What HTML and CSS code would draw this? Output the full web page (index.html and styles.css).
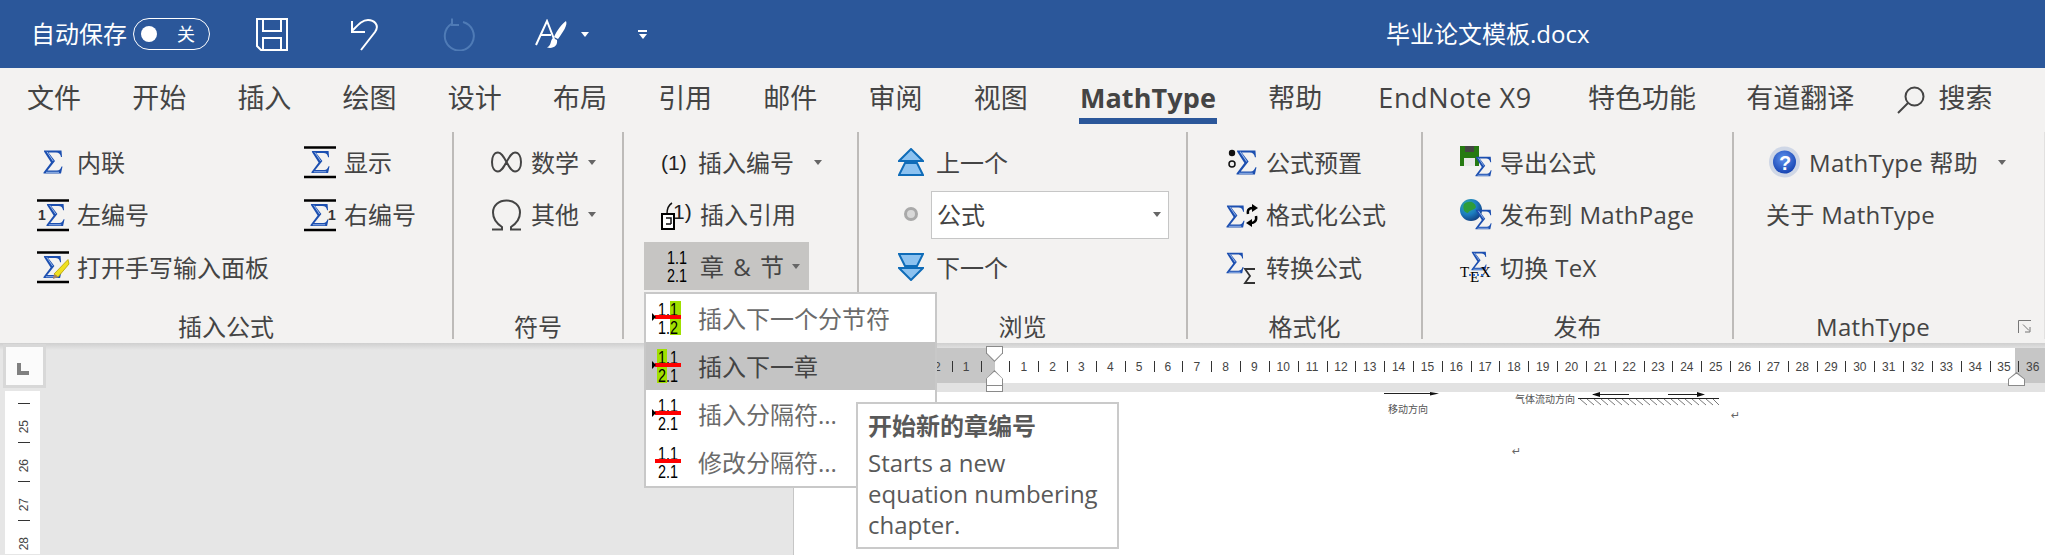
FILE: index.html
```html
<!DOCTYPE html>
<html lang="zh">
<head>
<meta charset="utf-8">
<title>毕业论文模板.docx</title>
<link rel="stylesheet" href="styles.css">
</head>
<body>
<svg class="defs" width="0" height="0">
  <defs>
    <symbol id="sigma" viewBox="0 0 20 24">
      <path fill="#1c4fb0" d="M1 0.5H18.5L19 7H18C17.5 4 16 2.5 13 2.5H5.5L12 11L4.5 20.5H14C16.5 20.5 17.5 19 18.5 16.5H19.5L18 23.5H0.5V22.5L8 12.5L1 1.5Z"/>
      <path fill="none" stroke="#9dbcec" stroke-width="1" d="M4 1.8L10.2 11M3 22.3H16"/>
    </symbol>
    <radialGradient id="globe" cx="35%" cy="30%" r="75%">
      <stop offset="0" stop-color="#35b0a0"/><stop offset=".55" stop-color="#1c7dc0"/><stop offset="1" stop-color="#123f80"/>
    </radialGradient>
    <radialGradient id="help" cx="45%" cy="35%" r="70%">
      <stop offset="0" stop-color="#5f92ee"/><stop offset="1" stop-color="#123fae"/>
    </radialGradient>
  </defs>
</svg>
<div class="app">
  <header class="titlebar">
    <span class="autosave">自动保存</span>
    <span class="toggle"><i class="knob"></i><span class="toggle-text">关</span></span>
    <svg class="qa qa-save" width="32" height="33" viewBox="0 0 32 33"><path d="M1 1H31V32H5L1 28ZM7 1V13H25V1M7 32V20H25V32"/></svg>
    <svg class="qa qa-undo" width="30" height="33" viewBox="0 0 30 33"><path d="M11 32L25 14C30 7 24 2 18 2C12 2 8 7 2 13M2 3V14H15"/></svg>
    <svg class="qa qa-redo" width="32" height="33" viewBox="0 0 32 33"><path d="M20 4A14.500 14.500 0 1 1 9 5.500M9 0.500V7H16"/></svg>
    <svg class="qa qa-paint" width="33" height="30" viewBox="0 0 33 30"><path d="M1 26L12 2L19 20M6 16H16"/><path class="solid" d="M31 2C33 6 28 13 23 20L19 18C22 11 27 5 31 2ZM18 19C15 21 17 26 12 28.500C18 30 23 27 22 21Z"/></svg>
    <i class="caret-w"></i>
    <span class="qat-more"><i class="qat-bar"></i><i class="caret-w small"></i></span>
    <span class="doc-title">毕业论文模板.docx</span>
  </header>

  <nav class="tabs">
    <span class="tab">文件</span>
    <span class="tab">开始</span>
    <span class="tab">插入</span>
    <span class="tab">绘图</span>
    <span class="tab">设计</span>
    <span class="tab">布局</span>
    <span class="tab">引用</span>
    <span class="tab">邮件</span>
    <span class="tab">审阅</span>
    <span class="tab">视图</span>
    <span class="tab active">MathType</span>
    <span class="tab">帮助</span>
    <span class="tab tab-en">EndNote X9</span>
    <span class="tab tab-sp">特色功能</span>
    <span class="tab tab-yd">有道翻译</span>
    <span class="search">
      <svg width="28" height="28" viewBox="0 0 28 28"><circle cx="17.500" cy="10.500" r="9"/><path d="M11 17L1 27"/></svg>
      <span class="tab">搜索</span>
    </span>
  </nav>

  <section class="ribbon">
    <div class="group g-insert">
      <div class="body two-col">
        <div class="item">
          <svg class="ic" width="32" height="32"><use href="#sigma" x="6" y="4" width="20" height="24"/></svg><span>内联</span>
        </div>
        <div class="item">
          <svg class="ic" width="32" height="32"><path class="rule" d="M0 1.500H32M0 31H32"/><use href="#sigma" x="7" y="4" width="19" height="24"/></svg><span>显示</span>
        </div>
        <div class="item">
          <svg class="ic" width="32" height="32"><path class="rule" d="M0 1.500H32M0 31H32"/><text class="digit" x="1" y="21">1</text><use href="#sigma" x="9" y="4" width="19" height="24"/></svg><span>左编号</span>
        </div>
        <div class="item">
          <svg class="ic" width="32" height="32"><path class="rule" d="M0 1.500H32M0 31H32"/><use href="#sigma" x="6" y="4" width="19" height="24"/><text class="digit" x="24" y="21">1</text></svg><span>右编号</span>
        </div>
        <div class="item span-2">
          <svg class="ic" width="32" height="32"><path class="rule" d="M0 1.500H32M0 31H32"/><use href="#sigma" x="6" y="4" width="19" height="24"/><path fill="#f0e020" stroke="#b5a000" stroke-width=".8" d="M31 8.500L32 13L21 26L17 23Z"/><path fill="#a98060" d="M17 23L21 26L16 28Z"/></svg><span>打开手写输入面板</span>
        </div>
      </div>
      <div class="label">插入公式</div>
    </div>

    <div class="group g-symbol">
      <div class="body">
        <div class="item">
          <svg class="ic-31" width="31" height="32" viewBox="0 0 31 32"><path class="line" d="M15.500 16C12 9.500 10 6.500 7 6.500C3 6.500 1 11 1 16C1 21 3 25.500 7 25.500C10 25.500 12 22.500 15.500 16C19 9.500 21 6.500 24 6.500C28 6.500 30 11 30 16C30 21 28 25.500 24 25.500C21 25.500 19 22.500 15.500 16Z"/></svg>
          <span>数学</span><i class="caret"></i>
        </div>
        <div class="item">
          <svg class="ic-31" width="31" height="32" viewBox="0 0 31 32"><path class="line" d="M1 30.500H11V28C5 24 2 19 2 13.500C2 6 8 1.500 15.500 1.500C23 1.500 29 6 29 13.500C29 19 26 24 20 28V30.500H30"/></svg>
          <span>其他</span><i class="caret"></i>
        </div>
      </div>
      <div class="label">符号</div>
    </div>

    <div class="group g-number">
      <div class="body">
        <div class="item tight">
          <svg class="ic" width="32" height="32"><text class="paren" x="1" y="24">(1)</text></svg>
          <span>插入编号</span><i class="caret caret-far"></i>
        </div>
        <div class="item">
          <svg class="ic" width="32" height="32" viewBox="0 0 32 32"><text class="paren" x="13" y="20">1)</text><path class="line thin" d="M12 4C7 7 7 12 7 15"/><rect x="2" y="15" width="12" height="15" fill="#fff" stroke="#000" stroke-width="2"/><path class="line thin" d="M6 19H11V25M11 25L6 25"/></svg>
          <span>插入引用</span>
        </div>
        <div class="item active">
          <svg class="ic" width="32" height="34" viewBox="0 0 32 34"><text class="num" x="7" y="15" textLength="20" lengthAdjust="spacingAndGlyphs">1.1</text><text class="num" x="7" y="33" textLength="20" lengthAdjust="spacingAndGlyphs">2.1</text></svg>
          <span class="spaced">章 &amp; 节</span><i class="caret"></i>
        </div>
      </div>
      <div class="label"></div>
    </div>

    <div class="group g-browse">
      <div class="body">
        <div class="item">
          <svg class="ic-nav" width="26" height="28" viewBox="0 0 26 28"><path class="tri" d="M13 1L25 13H1ZM7 15H19L25 27H1Z"/></svg><span>上一个</span>
        </div>
        <div class="item combo-row">
          <span class="radio-box"><i class="radio"></i></span>
          <div class="combo"><span>公式</span><i class="caret"></i></div>
        </div>
        <div class="item">
          <svg class="ic-nav" width="26" height="28" viewBox="0 0 26 28"><path class="tri" d="M13 27L25 15H1ZM7 13H19L25 1H1Z"/></svg><span>下一个</span>
        </div>
      </div>
      <div class="label">浏览</div>
    </div>

    <div class="group g-format">
      <div class="body">
        <div class="item">
          <svg class="ic" width="32" height="32"><circle cx="6" cy="7" r="3.200" fill="#111"/><circle cx="6" cy="18" r="3" fill="#eee" stroke="#111" stroke-width="1.500"/><use href="#sigma" x="10" y="3" width="21" height="27"/></svg><span>公式预置</span>
        </div>
        <div class="item">
          <svg class="ic" width="32" height="32"><use href="#sigma" x="0" y="5" width="19" height="25"/><path class="line black" d="M22 15C21 10 24 9 27 9M30 17C31 22 28 24 25 24"/><path class="blackfill" d="M26 5L32 9L26 13ZM26 20L20 24L26 28Z"/></svg><span>格式化公式</span>
        </div>
        <div class="item">
          <svg class="ic" width="32" height="34" viewBox="0 0 32 34"><use href="#sigma" x="0" y="1" width="18" height="24"/><path class="line dark" d="M29 19H19L24 26L19 33H29"/></svg><span>转换公式</span>
        </div>
      </div>
      <div class="label">格式化</div>
    </div>

    <div class="group g-publish">
      <div class="body">
        <div class="item">
          <svg class="ic" width="32" height="32"><rect x="0" y="0" width="19" height="20" fill="#267a12"/><rect x="5" y="0" width="9" height="6" fill="#444"/><rect x="4" y="12" width="11" height="8" fill="#e8e8e8"/><use href="#sigma" x="15" y="9" width="17" height="23"/></svg><span>导出公式</span>
        </div>
        <div class="item">
          <svg class="ic" width="32" height="32"><circle cx="11" cy="11" r="11" fill="url(#globe)"/><path fill="#2e9d3a" d="M4 5C9 1 15 3 16 8C14 12 10 10 8 14C5 14 2 10 4 5Z"/><use href="#sigma" x="15" y="9" width="17" height="23"/></svg><span class="latin">发布到 MathPage</span>
        </div>
        <div class="item">
          <svg class="ic" width="32" height="32"><use href="#sigma" x="11" y="0" width="16" height="20"/><text class="tex" x="0" y="26">T</text><text class="tex" x="10" y="31">E</text><text class="tex" x="20" y="26">X</text><path stroke="#3a78d8" stroke-width="2" stroke-dasharray="2 2" d="M9 24H24"/></svg><span class="latin">切换 TeX</span>
        </div>
      </div>
      <div class="label">发布</div>
    </div>

    <div class="group g-mathtype">
      <div class="body">
        <div class="item">
          <svg class="ic-help" width="33" height="32" viewBox="0 0 33 32"><circle cx="16.500" cy="16" r="15.500" fill="#cfd7e6"/><circle cx="16.500" cy="16" r="11.500" fill="url(#help)"/><text class="help-q" x="11" y="24">?</text></svg>
          <span class="latin">MathType 帮助</span><i class="caret caret-help"></i>
        </div>
        <div class="item about"><span class="latin">关于 MathType</span></div>
      </div>
      <div class="label label-mt">MathType</div>
      <svg class="launcher" width="14" height="14" viewBox="0 0 14 14"><path d="M13 .5H.5V13" /><path d="M5 4.500L11 10.500M12 7V12H7"/></svg>
    </div>
  </section>

  <main class="workspace">
    <aside class="side">
      <div class="corner"><i class="corner-mark"></i></div>
      <div class="vruler">
        <div class="vcell"><span>25</span></div>
        <div class="vcell"><span>26</span></div>
        <div class="vcell"><span>27</span></div>
        <div class="vcell"><span>28</span></div>
      </div>
    </aside>
    <div class="docarea">
      <div class="hruler-wrap">
        <div class="hruler">
          <span>6</span><span>5</span><span>4</span><span>3</span><span>2</span><span>1</span><span></span><span>1</span><span>2</span><span>3</span><span>4</span><span>5</span><span>6</span><span>7</span><span>8</span><span>9</span><span>10</span><span>11</span><span>12</span><span>13</span><span>14</span><span>15</span><span>16</span><span>17</span><span>18</span><span>19</span><span>20</span><span>21</span><span>22</span><span>23</span><span>24</span><span>25</span><span>26</span><span>27</span><span>28</span><span>29</span><span>30</span><span>31</span><span>32</span><span>33</span><span>34</span><span>35</span><span>36</span>
        </div>
      </div>
      <div class="page">
        <svg class="figure" width="370" height="70" viewBox="0 0 370 70">
          <path class="fig-line" d="M4 1.500H52M213 2.500H249M288 2.500H318M198 6.500H339"/>
          <path class="fig-solid" d="M50 0L59 1.500L50 3.500ZM220 0L212 2.500L220 5ZM317 0L325 2.500L317 5Z"/>
          <path class="fig-hatch" d="M200 7L207 13M207 7L214 13M214 7L221 13M221 7L228 13M228 7L235 13M235 7L242 13M242 7L249 13M249 7L256 13M256 7L263 13M263 7L270 13M270 7L277 13M277 7L284 13M284 7L291 13M291 7L298 13M298 7L305 13M305 7L312 13M312 7L319 13M319 7L326 13M326 7L333 13M333 7L339 13"/>
          <text class="fig-text" x="8" y="21">移动方向</text>
          <text class="fig-text" x="135" y="11">气体流动方向</text>
          <text class="fig-mark" x="351" y="27">↵</text>
          <text class="fig-mark" x="132" y="63">↵</text>
        </svg>
      </div>
    </div>
    <div class="marker marker-top"></div>
    <div class="marker marker-bottom"><i></i></div>
    <div class="marker marker-right"></div>
  </main>

  <div class="menu">
    <div class="menu-item">
      <svg class="ic-menu" width="30" height="34" viewBox="0 0 30 34"><rect x="18" y="0" width="11" height="34" fill="#a0e000"/><text class="num" x="6" y="15" textLength="20" lengthAdjust="spacingAndGlyphs">1.1</text><text class="num" x="6" y="33" textLength="20" lengthAdjust="spacingAndGlyphs">1.2</text><rect x="3" y="14" width="26" height="4" fill="#f00"/><path d="M0 12L4 16L0 20Z"/></svg>
      <span>插入下一个分节符</span>
    </div>
    <div class="menu-item on">
      <svg class="ic-menu" width="30" height="34" viewBox="0 0 30 34"><rect x="5" y="0" width="10" height="34" fill="#a0e000"/><text class="num" x="6" y="15" textLength="20" lengthAdjust="spacingAndGlyphs">1.1</text><text class="num" x="6" y="33" textLength="20" lengthAdjust="spacingAndGlyphs">2.1</text><rect x="3" y="14" width="26" height="4" fill="#f00"/><path d="M0 12L4 16L0 20Z"/></svg>
      <span>插入下一章</span>
    </div>
    <div class="menu-item">
      <svg class="ic-menu" width="30" height="34" viewBox="0 0 30 34"><text class="num" x="6" y="15" textLength="20" lengthAdjust="spacingAndGlyphs">1.1</text><text class="num" x="6" y="33" textLength="20" lengthAdjust="spacingAndGlyphs">2.1</text><rect x="3" y="14" width="26" height="4" fill="#f00"/><path d="M0 12L4 16L0 20Z"/></svg>
      <span>插入分隔符...</span>
    </div>
    <div class="menu-item">
      <svg class="ic-menu" width="30" height="34" viewBox="0 0 30 34"><text class="num" x="6" y="15" textLength="20" lengthAdjust="spacingAndGlyphs">1.1</text><text class="num" x="6" y="33" textLength="20" lengthAdjust="spacingAndGlyphs">2.1</text><rect x="3" y="14" width="26" height="4" fill="#f00"/></svg>
      <span>修改分隔符...</span>
    </div>
  </div>

  <div class="tooltip">
    <div class="tip-title">开始新的章编号</div>
    <div class="tip-text">Starts a new<br>equation numbering<br>chapter.</div>
  </div>
</div>
</body>
</html>
```

FILE: styles.css
```css
* { box-sizing: border-box; }
html, body { margin: 0; padding: 0; }
body {
  width: 2045px;
  height: 555px;
  overflow: hidden;
  background: #e6e6e6;
  font-family: "Open Sans", "Noto Sans CJK SC", sans-serif;
  color: #444;
}
i { display: block; }
.defs { position: absolute; }
.app { position: relative; width: 2045px; height: 555px; overflow: hidden; }

/* title bar */
.titlebar {
  display: flex;
  align-items: center;
  height: 68px;
  padding-left: 31px;
  background: #2b579a;
  color: #fff;
  font-size: 24px;
}
.autosave { width: 96px; line-height: 32px; white-space: nowrap; }
.toggle {
  display: flex;
  align-items: center;
  width: 77px;
  height: 32px;
  margin-left: 6px;
  padding-left: 7px;
  border: 1px solid #fff;
  border-radius: 16px;
}
.knob { width: 16px; height: 16px; border-radius: 50%; background: #fff; }
.toggle-text { margin-left: 20px; font-size: 18px; line-height: 20px; }
.qa { fill: none; stroke: #fff; stroke-width: 2; }
.qa .solid { fill: #fff; stroke: none; }
.qa-save { margin-left: 46px; }
.qa-undo { margin-left: 62px; }
.qa-redo { margin-left: 63px; stroke: #4f7bb6; }
.qa-paint { margin-left: 60px; }
.caret-w {
  width: 0;
  height: 0;
  margin-left: 13px;
  border-left: 4.500px solid transparent;
  border-right: 4.500px solid transparent;
  border-top: 5px solid #fff;
}
.qat-more { display: flex; flex-direction: column; align-items: center; gap: 2px; width: 9px; margin-left: 49px; }
.qat-bar { width: 9px; height: 2px; background: #fff; }
.caret-w.small { margin-left: 0; }
.doc-title { margin-left: 739px; line-height: 32px; white-space: nowrap; }

/* tabs */
.tabs {
  display: flex;
  gap: 51.200px;
  height: 62px;
  padding-left: 27px;
  background: #f3f2f1;
  font-size: 27px;
}
.tab {
  height: 56px;
  padding-top: 12px;
  line-height: 36px;
  border-bottom: 6px solid transparent;
  white-space: nowrap;
}
.tab.active { padding: 12px 1px 0; font-weight: 700; letter-spacing: .1px; border-bottom-color: #2b579a; }
.tab-en { margin-left: 5px; letter-spacing: .6px; }
.tab-sp { margin-left: 5px; }
.tab-yd { margin-left: -1px; }
.search { display: flex; align-items: flex-start; gap: 13px; margin-left: -8px; }
.search svg { margin-top: 18px; fill: none; stroke: #444; stroke-width: 2; }

/* ribbon */
.ribbon {
  display: flex;
  height: 213px;
  padding: 2px 0 4px;
  background: #f3f2f1;
  font-size: 24px;
}
.group {
  position: relative;
  display: flex;
  flex-direction: column;
  flex: none;
  padding-top: 4px;
  border-right: 2px solid #bdbbb9;
}
.body { flex: none; }
.item {
  display: flex;
  align-items: center;
  gap: 8px;
  height: 52.500px;
  white-space: nowrap;
}
.item span { margin-top: -2px; }
.latin { letter-spacing: .3px; }
.spaced { word-spacing: 3px; }
.two-col { display: grid; grid-template-columns: 267px 1fr; padding-left: 37px; }
.span-2 { grid-column: 1 / 3; }
.label {
  margin-top: auto;
  height: 24px;
  line-height: 24px;
  text-align: center;
  white-space: nowrap;
}
.label-mt { padding-right: 32px; letter-spacing: .3px; }
.ic { flex: none; overflow: visible; }
.ic-31, .ic-nav, .ic-help { flex: none; }
.rule { stroke: #000; stroke-width: 2.500; fill: none; }
.digit { font: 700 14px "Liberation Sans", sans-serif; fill: #333; }
.line { fill: none; stroke: #444; stroke-width: 2; }
.line.thin { stroke-width: 1.500; stroke: #111; }
.line.black { stroke: #000; stroke-width: 2.500; }
.line.dark { stroke: #333; stroke-width: 1.800; }
.blackfill { fill: #000; }
.paren { font: 400 21px "Liberation Sans", sans-serif; fill: #222; }
.num { font: 400 18px "Liberation Sans", sans-serif; fill: #000; }
.tex { font: 400 15px "Liberation Serif", serif; fill: #000; }
.help-q { font: 700 20px "Liberation Sans", sans-serif; fill: #fff; }
.tri { fill: #8cc2f0; stroke: #0f6cb8; stroke-width: 2; }
.caret {
  width: 0;
  height: 0;
  border-left: 4.500px solid transparent;
  border-right: 4.500px solid transparent;
  border-top: 5px solid #666;
}
.g-insert { width: 454px; }
.g-symbol { width: 170px; padding-left: 37px; }
.g-symbol .item { gap: 9px; }
.g-symbol .label { margin-left: -37px; }
.g-number { width: 235px; padding-left: 36px; }
.item.tight { gap: 6px; }
.caret-far { margin-left: 14px; }
.item.active {
  width: 165px;
  height: 48px;
  margin: 1px 0 0 -16px;
  padding-left: 16px;
  background: #c6c5c3;
}
.g-browse { width: 329px; padding-left: 39px; }
.g-browse .item { gap: 12px; }
.g-browse .label { margin-left: -39px; }
.g-browse .combo-row { gap: 7px; }
.radio-box { display: flex; justify-content: center; width: 26px; margin-top: 0; }
.radio { width: 14px; height: 14px; border-radius: 50%; background: #d8d8d8; border: 3px solid #a9a9a9; }
.combo {
  display: flex;
  align-items: center;
  justify-content: space-between;
  width: 238px;
  height: 48px;
  padding: 0 7px 0 5px;
  background: #fff;
  border: 1px solid #c6c6c6;
}
.g-format { width: 235px; padding-left: 38px; }
.g-format .label { margin-left: -38px; }
.g-publish { width: 311px; padding-left: 37px; }
.g-publish .label { margin-left: -37px; }
.g-mathtype { width: 312px; padding-left: 34px; border-right-color: #e2e1e0; }
.g-mathtype .label { margin-left: -34px; }
.caret-help { margin-left: 12px; }
.about { margin-left: -2px; }
.launcher {
  position: absolute;
  right: 12px;
  bottom: 5px;
  fill: none;
  stroke: #777;
  stroke-width: 1;
}

/* workspace */
.workspace {
  position: relative;
  display: flex;
  height: 212px;
  background: linear-gradient(#cfcfcf, #e6e6e6 7px);
}
.side { flex: none; width: 793px; padding-top: 1px; }
.corner {
  display: flex;
  align-items: flex-end;
  justify-content: center;
  width: 43px;
  height: 44px;
  margin-left: 3px;
  padding: 0 3px 10px 0;
  background: #fbfbfb;
  border: 3px solid #d8d8d8;
}
.corner-mark { width: 12px; height: 12px; border-left: 4px solid #808080; border-bottom: 4px solid #808080; }
.vruler { width: 35px; height: 163px; margin: 3px 0 0 5px; padding-top: 12px; background: #fff; overflow: hidden; }
.vcell {
  position: relative;
  display: flex;
  align-items: center;
  justify-content: center;
  height: 39px;
  padding-top: 8px;
  font: 12px "Liberation Sans", sans-serif;
  color: #444;
}
.vcell::before {
  content: "";
  position: absolute;
  top: 0;
  left: 13px;
  width: 12px;
  height: 1px;
  background: #333;
}
.vcell span { writing-mode: vertical-rl; transform: rotate(180deg); margin-left: 3px; }
.docarea { flex: 1; display: flex; flex-direction: column; min-width: 0; padding-top: 5px; }
.hruler-wrap { flex: none; height: 44px; padding-bottom: 9px; background: #e2e2e2; margin-left: 1px; }
.hruler {
  display: flex;
  height: 35px;
  padding-left: 13.600px;
  overflow: hidden;
  background: linear-gradient(90deg, #c6c6c6 201px, #fff 201px, #fff 1221px, #c6c6c6 1221px);
  font: 12px "Liberation Sans", sans-serif;
  color: #444;
}
.hruler span {
  position: relative;
  flex: 0 0 28.830px;
  text-align: center;
  line-height: 38px;
}
.hruler span::before {
  content: "";
  position: absolute;
  left: 0;
  top: 13px;
  width: 1px;
  height: 11px;
  background: #333;
}
.page { flex: 1; background: #fff; border-left: 1px solid #c6c6c6; min-height: 0; overflow: hidden; }
.figure { display: block; margin-left: 586px; }
.fig-line { stroke: #222; stroke-width: 1.200; fill: none; }
.fig-solid { fill: #111; }
.fig-hatch { stroke: #555; stroke-width: .8; fill: none; }
.fig-text { font: 10px "Noto Sans CJK SC", sans-serif; fill: #555; }
.fig-mark { font: 11px "DejaVu Sans", sans-serif; fill: #666; }
.marker { position: absolute; background: #fff; border: 1px solid #8a8a8a; }
.marker-top { left: 986px; top: 3px; width: 17px; height: 16px; clip-path: polygon(0 0, 100% 0, 100% 45%, 50% 100%, 0 45%); background: #8a8a8a; border: 0; }
.marker-top::after { content: ""; position: absolute; inset: 1px 1px 1.500px; background: #fff; clip-path: polygon(0 0, 100% 0, 100% 45%, 50% 100%, 0 45%); }
.marker-bottom { left: 986px; top: 27px; width: 17px; height: 22px; background: #8a8a8a; border: 0; clip-path: polygon(50% 0, 100% 40%, 100% 100%, 0 100%, 0 40%); }
.marker-bottom::after { content: ""; position: absolute; inset: 1.500px 1px 7px; background: #fff; clip-path: polygon(50% 0, 100% 50%, 100% 100%, 0 100%, 0 50%); }
.marker-bottom i { position: absolute; left: 1px; right: 1px; bottom: 1px; height: 5px; background: #fff; }
.marker-right { left: 2008px; top: 29px; width: 17px; height: 14px; background: #8a8a8a; border: 0; clip-path: polygon(50% 0, 100% 50%, 100% 100%, 0 100%, 0 50%); }
.marker-right::after { content: ""; position: absolute; inset: 1.500px 1px 1px; background: #fff; clip-path: polygon(50% 0, 100% 50%, 100% 100%, 0 100%, 0 50%); }

/* dropdown menu */
.menu {
  position: absolute;
  left: 644px;
  top: 292px;
  width: 293px;
  height: 196px;
  background: #fff;
  border: 2px solid #c8c8c8;
  font-size: 24px;
  color: #6b6b6b;
}
.menu-item {
  display: flex;
  align-items: center;
  gap: 16px;
  height: 48px;
  padding-left: 6px;
}
.menu-item span { margin-top: -2px; }
.menu-item.on { background: #c4c4c4; color: #444; }
.ic-menu { flex: none; overflow: visible; }

/* tooltip */
.tooltip {
  position: absolute;
  left: 856px;
  top: 402px;
  width: 263px;
  height: 147px;
  padding: 6px 0 0 10px;
  background: #fff;
  border: 2px solid #cacaca;
  color: #595959;
  font-size: 24px;
  line-height: 31px;
}
.tip-title { font-weight: 700; margin-bottom: 6px; }
```
